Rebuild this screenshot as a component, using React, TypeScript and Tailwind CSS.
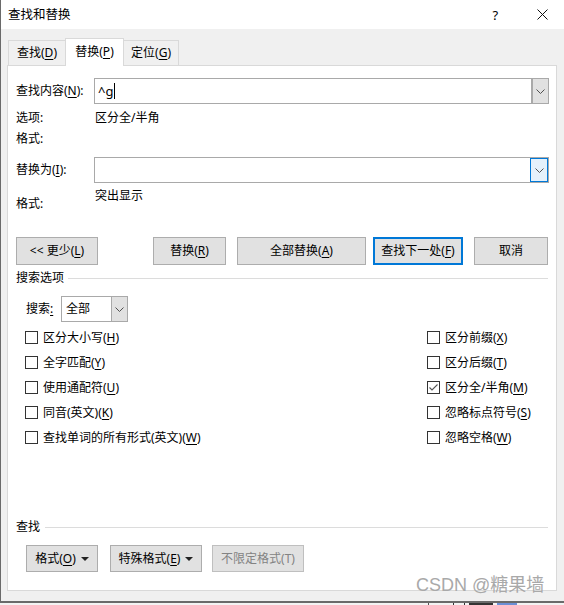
import type { ReactNode } from 'react'

// 助记字母下划线
function U({ children }: { children: ReactNode }) {
  return <span className="underline underline-offset-[2px] decoration-[1px]">{children}</span>
}

function Chevron() {
  return (
    <svg width="9" height="5" viewBox="0 0 9 5">
      <path d="M0.5 0.5 L4.5 4.5 L8.5 0.5" fill="none" stroke="#505050" strokeWidth="1" />
    </svg>
  )
}

function Caret() {
  return (
    <svg width="8" height="4" viewBox="0 0 8 4" className="ml-[5px]">
      <path d="M0 0 L8 0 L4 4 Z" fill="#222" />
    </svg>
  )
}

function Btn({ w, children, primary, disabled }: { w: string; children: ReactNode; primary?: boolean; disabled?: boolean }) {
  const border = primary
    ? 'border-2 border-[#0078d7]'
    : disabled
      ? 'border border-[#bfbfbf] text-[#838383]'
      : 'border border-[#adadad]'
  return (
    <div className={`${w} h-full flex items-center justify-center bg-[#e1e1e1] ${border}`}>
      {children}
    </div>
  )
}

function Check({ label, checked }: { label: ReactNode; checked?: boolean }) {
  return (
    <div className="h-[25px] flex items-center">
      <div className="w-[13px] h-[13px] border border-[#333] bg-white flex items-center justify-center">
        {checked && (
          <svg width="11" height="11" viewBox="0 0 11 11">
            <path d="M1.5 5.5 L4 8 L9.5 2.5" fill="none" stroke="#555" strokeWidth="1.1" />
          </svg>
        )}
      </div>
      <span className="ml-[5px]">{label}</span>
    </div>
  )
}

export default function App() {
  return (
    <div className="relative w-[564px] h-[605px] overflow-hidden bg-[#f0f0f0] text-[12px] leading-[18px] text-black font-['Noto_Sans','Noto_Sans_CJK_SC',sans-serif]">
      <div className="h-[603px] flex flex-col border-l border-b-2 border-[#6a6a6a]">
        {/* 标题栏 */}
        <div className="h-[29px] bg-white flex items-center pl-[7px] shrink-0">
          <span className="text-[12.5px]">查找和替换</span>
          <span className="ml-[422px] text-[13px]">?</span>
          <svg width="11" height="11" viewBox="0 0 11 11" className="ml-[39px]">
            <path d="M0.5 0.5 L10.5 10.5 M10.5 0.5 L0.5 10.5" stroke="#111" strokeWidth="1" />
          </svg>
        </div>

        <div className="flex-1 pl-[6px] pt-[9px]">
          {/* 选项卡 */}
          <div className="flex items-end h-[27px] pl-[1px]">
            <div className="w-[57px] h-[25px] border-t border-l border-[#d9d9d9] flex items-center justify-center">
              查找(<U>D</U>)
            </div>
            <div className="relative z-10 w-[59px] h-[28px] -mb-px border-t border-l border-r border-[#d9d9d9] bg-white flex items-center justify-center pb-[2px]">
              替换(<U>P</U>)
            </div>
            <div className="w-[55px] h-[25px] border-t border-r border-[#d9d9d9] flex items-center justify-center">
              定位(<U>G</U>)
            </div>
          </div>

          {/* 面板 */}
          <div className="w-[550px] h-[526px] border border-[#d9d9d9] bg-white flex flex-col pb-[18px]">
            <div className="mt-[12px] h-[26px] flex items-center pl-[8px]">
              <span className="w-[78px]">查找内容(<U>N</U>):</span>
              <div className="w-[455px] h-full flex border border-[#a9a9a9]">
                <div className="flex-1 flex items-center pl-[3px]">
                  <span className="text-[13px]">^g</span>
                  <span className="ml-[1px] w-px h-[16px] bg-black" />
                </div>
                <div className="w-[17px] h-full bg-[#e1e1e1] border-l-2 border-[#a9a9a9] flex items-center justify-center">
                  <Chevron />
                </div>
              </div>
            </div>

            <div className="mt-[5px] h-[18px] flex pl-[8px]">
              <span className="w-[79px]">选项:</span>
              <span>区分全/半角</span>
            </div>
            <div className="mt-[3px] h-[18px] flex pl-[8px]">
              <span>格式:</span>
            </div>

            <div className="mt-[9px] h-[26px] flex items-center pl-[8px]">
              <span className="w-[78px]">替换为(<U>I</U>):</span>
              <div className="w-[455px] h-full flex border border-[#a9a9a9]">
                <div className="flex-1" />
                <div className="w-[18px] h-full bg-[#e5f1fb] border border-[#0078d7] flex items-center justify-center">
                  <Chevron />
                </div>
              </div>
            </div>

            <div className="mt-[4px] h-[26px] flex items-start pl-[8px]">
              <span className="w-[79px] mt-[8px]">格式:</span>
              <span>突出显示</span>
            </div>

            {/* 按钮 */}
            <div className="mt-[24px] h-[28px] flex pl-[8px]">
              <Btn w="w-[82px]">
                &lt;&lt; 更少(<U>L</U>)
              </Btn>
              <div className="w-[55px]" />
              <Btn w="w-[73px]">
                替换(<U>R</U>)
              </Btn>
              <div className="w-[11px]" />
              <Btn w="w-[129px]">
                全部替换(<U>A</U>)
              </Btn>
              <div className="w-[7px]" />
              <Btn w="w-[90px]" primary>
                查找下一处(<U>F</U>)
              </Btn>
              <div className="w-[11px]" />
              <Btn w="w-[74px]">取消</Btn>
            </div>

            <div className="mt-[4px] h-[18px] flex items-center pl-[8px]">
              <span>搜索选项</span>
              <div className="ml-[4px] w-[480px] h-px bg-[#dcdcdc]" />
            </div>

            <div className="mt-[9px] h-[26px] flex items-center pl-[18px]">
              <span className="w-[35px]">
                搜索<U>:</U>
              </span>
              <div className="w-[67px] h-full flex border border-[#a9a9a9]">
                <div className="flex-1 flex items-center pl-[4px]">全部</div>
                <div className="w-[16px] h-full bg-[#e1e1e1] border-l border-[#a9a9a9] flex items-center justify-center">
                  <Chevron />
                </div>
              </div>
            </div>

            {/* 复选框 */}
            <div className="mt-[3px] flex">
              <div className="w-[419px] pl-[17px] flex flex-col">
                <Check label={<>区分大小写(<U>H</U>)</>} />
                <Check label={<>全字匹配(<U>Y</U>)</>} />
                <Check label={<>使用通配符(<U>U</U>)</>} />
                <Check label={<>同音(英文)(<U>K</U>)</>} />
                <Check label={<>查找单词的所有形式(英文)(<U>W</U>)</>} />
              </div>
              <div className="flex flex-col">
                <Check label={<>区分前缀(<U>X</U>)</>} />
                <Check label={<>区分后缀(<U>T</U>)</>} />
                <Check checked label={<>区分全/半角(<U>M</U>)</>} />
                <Check label={<>忽略标点符号(<U>S</U>)</>} />
                <Check label={<>忽略空格(<U>W</U>)</>} />
              </div>
            </div>

            <div className="mt-auto h-[18px] flex items-center pl-[8px]">
              <span>查找</span>
              <div className="ml-[5px] w-[503px] h-px bg-[#dcdcdc]" />
            </div>

            <div className="mt-[9px] h-[27px] flex pl-[18px]">
              <Btn w="w-[72px]">
                格式(<U>O</U>)
                <Caret />
              </Btn>
              <div className="w-[12px]" />
              <Btn w="w-[92px]">
                特殊格式(<U>E</U>)
                <Caret />
              </Btn>
              <div className="w-[10px]" />
              <Btn w="w-[92px]" disabled>
                不限定格式(T)
              </Btn>
            </div>
          </div>
        </div>
      </div>

      {/* 底部露出的下层窗口 */}
      <div className="h-[2px] flex bg-[#f3f3f3]">
        <div className="ml-[428px] w-px h-full bg-[#555]" />
        <div className="ml-[24px] w-[12px] h-full border-l border-r border-[#333]" />
        <div className="ml-[4px] w-[24px] h-full bg-[#333]" />
        <div className="ml-[4px] w-[20px] h-full bg-[#6b8fd6]" />
      </div>

      {/* 水印 */}
      <div className="absolute left-[416px] top-[574px] text-[18px] leading-[22px] text-[#a9a9a9] font-['Liberation_Sans','Noto_Sans_CJK_SC',sans-serif] whitespace-nowrap">
        CSDN @糖果墙
      </div>
    </div>
  )
}
